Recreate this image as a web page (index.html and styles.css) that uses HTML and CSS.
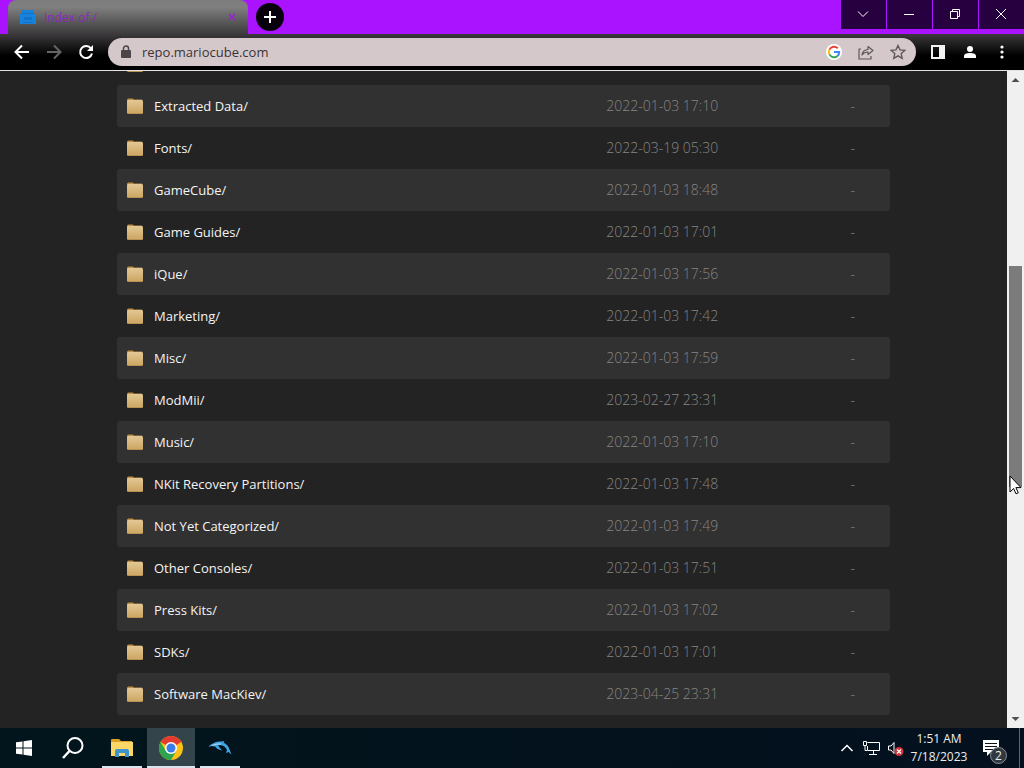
FILE: index.html
```html
<!DOCTYPE html>
<html lang="en">
<head>
    <meta charset="UTF-8">
    <meta name="viewport" content="width=device-width, initial-scale=1.0">
    <title>Index of /</title>
    <link rel="stylesheet" href="styles.css">
    <script src="listing.js" defer></script>
</head>
<body>
    <!-- Folder icon shared by all the rows -->
    <svg class="defs" width="0" height="0" aria-hidden="true">
        <defs>
            <linearGradient id="folder-fill" x1="0" y1="0" x2="0" y2="1">
                <stop offset="0" stop-color="#e3c894"/>
                <stop offset="1" stop-color="#cba561"/>
            </linearGradient>
            <symbol id="folder" viewBox="0 0 16 16">
                <path d="M0 4V2q0-1.500 1.500-1.500h4L7 1.500h7.500q1 0 1 1v3H0z" fill="#bd9049"/>
                <rect x="0" y="2" width="16" height="14" rx="1.500" fill="url(#folder-fill)"/>
                <path d="M1 15.500h14" stroke="#b89350"/>
            </symbol>
        </defs>
    </svg>

    <header class="titlebar">
        <div class="tab">
            <svg width="16" height="16" viewBox="0 0 16 16">
                <path d="M1 1h13v3H1zM0 5h16v10H0z" fill="#1683dc"/>
                <path d="M4 8h8v3H4z" fill="#1471c8"/>
                <path d="M2 4.500h12M3 13.500h10" stroke="#146fc4"/>
            </svg>
            <span class="tab-title">Index of /</span>
            <button class="tab-close" aria-label="Close tab">
                <svg width="8" height="8" viewBox="0 0 8 8"><path d="M1 1l6 6M7 1l-6 6" stroke="#9a1fd6" stroke-width="1.500"/></svg>
            </button>
        </div>
        <button class="new-tab" aria-label="New tab">
            <svg width="12" height="12" viewBox="0 0 12 12"><path d="M6 0v12M0 6h12" stroke="#fff" stroke-width="2"/></svg>
        </button>
        <div class="window-buttons">
            <button aria-label="Search tabs"><svg width="12" height="12" viewBox="0 0 12 12"><path d="M1 3.500l5 5 5-5"/></svg></button>
            <button aria-label="Minimize"><svg width="12" height="12" viewBox="0 0 12 12"><path d="M1 6.500h10"/></svg></button>
            <button aria-label="Restore"><svg width="12" height="12" viewBox="0 0 12 12"><path d="M1.500 3.500h7v7h-7zM3.500 3.500v-2h7v7h-2"/></svg></button>
            <button aria-label="Close"><svg width="12" height="12" viewBox="0 0 12 12"><path d="M1 1l10 10M11 1L1 11"/></svg></button>
        </div>
    </header>

    <nav class="toolbar">
        <button aria-label="Back"><svg width="16" height="16" viewBox="0 0 16 16"><path d="M15 8H2M8 1.500L1.500 8 8 14.500" fill="none" stroke="#fff" stroke-width="2"/></svg></button>
        <button aria-label="Forward"><svg width="16" height="16" viewBox="0 0 16 16"><path d="M1 8h13M8 1.500L14.500 8 8 14.500" fill="none" stroke="#666" stroke-width="2"/></svg></button>
        <button aria-label="Reload"><svg width="16" height="16" viewBox="0 0 16 16"><path d="M13 4.500A6 6 0 1 0 14 9.500" fill="none" stroke="#fff" stroke-width="2"/><path d="M15 1v6H9z" fill="#fff"/></svg></button>
        <div class="omnibox">
            <svg width="10" height="14" viewBox="0 0 10 14"><rect x="0" y="5" width="10" height="8" rx="1" fill="#4b4548"/><path d="M2.500 6V3.500a2.500 2.500 0 0 1 5 0V6" fill="none" stroke="#4b4548" stroke-width="1.500"/></svg>
            <input type="text" value="repo.mariocube.com" aria-label="Address">
            <button aria-label="Search with Google">
                <svg width="16" height="16" viewBox="0 0 16 16">
                    <circle cx="8" cy="8" r="8" fill="#fff"/>
                    <g fill="none" stroke-width="2">
                        <path d="M11.800 4.200A5.200 5.200 0 0 0 3.400 5.600" stroke="#ea4335"/>
                        <path d="M3.400 5.600a5.200 5.200 0 0 0 0 4.800" stroke="#fbbc05"/>
                        <path d="M3.400 10.400a5.200 5.200 0 0 0 8.100 1.500" stroke="#34a853"/>
                        <path d="M11.500 11.900A5.200 5.200 0 0 0 13.200 8H8" stroke="#4285f4"/>
                    </g>
                </svg>
            </button>
            <button aria-label="Share"><svg width="16" height="16" viewBox="0 0 16 16"><path d="M3 5H1v10h12v-3M4 11q.500-5 6-5.500V2.500L15 6.500l-5 4V8Q6 8 4 11z" fill="none" stroke="#5f585b" stroke-width="1.200" stroke-linejoin="round"/></svg></button>
            <button aria-label="Bookmark"><svg width="16" height="16" viewBox="0 0 16 16"><path d="M8 1.500l2 4.400 4.800.500-3.600 3.200 1 4.700L8 11.900l-4.200 2.400 1-4.700L1.200 6.400 6 5.900z" fill="none" stroke="#5f585b" stroke-width="1.400"/></svg></button>
        </div>
        <button aria-label="Side panel"><svg width="14" height="14" viewBox="0 0 14 14"><path d="M0 0h14v14H0zM2 2v10h6V2z" fill="#f2f2f2" fill-rule="evenodd"/></svg></button>
        <button aria-label="Profile"><svg width="16" height="16" viewBox="0 0 16 16"><circle cx="8" cy="5" r="3" fill="#fff"/><path d="M2 14v-2q0-3 6-3t6 3v2z" fill="#fff"/></svg></button>
        <button aria-label="Menu"><svg width="4" height="14" viewBox="0 0 4 14"><circle cx="2" cy="2" r="1.600" fill="#fff"/><circle cx="2" cy="7" r="1.600" fill="#fff"/><circle cx="2" cy="12" r="1.600" fill="#fff"/></svg></button>
    </nav>

    <div class="viewport">
        <main>
            <table class="listing">
                <colgroup>
                    <col class="col-name">
                    <col class="col-date">
                    <col class="col-size">
                </colgroup>
                <tbody id="files">
                    <tr><td><svg class="folder"><use href="#folder"/></svg></td><td></td><td></td></tr>
                </tbody>
            </table>
        </main>
        <div class="scrollbar">
            <svg width="17" height="17" viewBox="0 0 17 17"><path d="M4.500 11h8L8.500 7z" fill="#505050"/></svg>
            <div class="track">
                <div class="thumb">
                    <svg class="cursor" width="13" height="20" viewBox="0 0 13 20"><path d="M1 1v16l3.600-3.500 2.400 5.300 2.300-1-2.400-5.200H12z" fill="#fff" stroke="#000"/></svg>
                </div>
            </div>
            <svg width="17" height="17" viewBox="0 0 17 17"><path d="M4.500 6h8l-4 4z" fill="#505050"/></svg>
        </div>
    </div>

    <footer class="taskbar">
        <button aria-label="Start"><svg width="16" height="16" viewBox="0 0 16 16"><path d="M0 2.300l6.500-.900v6.100H0zM7.500 1.200L16 0v7.500H7.500zM0 8.500h6.500v6.100L0 13.700zM7.500 8.500H16V16l-8.500-1.200z" fill="#fff"/></svg></button>
        <button aria-label="Search"><svg width="24" height="24" viewBox="0 0 24 24"><circle cx="14" cy="9.500" r="7.500" fill="none" stroke="#fff" stroke-width="2"/><path d="M8.500 15L2 22" stroke="#fff" stroke-width="2.500"/></svg></button>
        <button class="running" aria-label="File Explorer">
            <svg width="22" height="20" viewBox="0 0 22 20">
                <path d="M0 2q0-1 1-1h7l2 2h11v4H0z" fill="#d9a227"/>
                <path d="M0 4h22v14H0z" fill="#fbd768"/>
                <path d="M4 19v-6q0-2 2-2h10q2 0 2 2v6h-4v-4H8v4z" fill="#3f94cb"/>
            </svg>
        </button>
        <button class="running active" aria-label="Google Chrome">
            <svg width="24" height="24" viewBox="0 0 24 24">
                <circle cx="12" cy="12" r="12" fill="#fbc116"/>
                <path d="M12 12L1.600 6A12 12 0 0 1 22.400 6z" fill="#e33b2e"/>
                <path d="M1.600 6A12 12 0 0 0 12 24l5.200-9H6.800z" fill="#2da44e"/>
                <circle cx="12" cy="12" r="6" fill="#fff"/>
                <circle cx="12" cy="12" r="4.500" fill="#3b7de8"/>
            </svg>
        </button>
        <button class="running" aria-label="Dolphin">
            <svg width="24" height="16" viewBox="0 0 24 16">
                <path d="M.500 7Q2 4 5 3.500 8 1 13 1.500L16.500 1l-1 1.500q5 2.500 6 7l2 5-3-2.500-2.500 1 1-3Q17 5.500 12 5L10 5.500l4 5-4.500-1.500L7 6.500 3.500 6z" fill="#3fa4e4"/>
                <path d="M4 5.500q5-2 9-1.500" fill="none" stroke="#b7def5"/>
            </svg>
        </button>
        <div class="tray">
            <button aria-label="Show hidden icons"><svg width="14" height="10" viewBox="0 0 14 10"><path d="M1.500 8L7 2.500 12.500 8" fill="none" stroke="#fff" stroke-width="1.500"/></svg></button>
            <button aria-label="Network"><svg width="17" height="14" viewBox="0 0 17 14"><path d="M4.500 1.500h12v8h-12V5M.500.500h3v4h-3zM2 4.500v5h2M10.500 10v3M6 13.500h8" fill="none" stroke="#fff"/></svg></button>
            <button aria-label="Volume muted"><svg width="17" height="15" viewBox="0 0 17 15"><path d="M1.500 5H4l3-3.500v11L4 9H1.500z" fill="none" stroke="#fff"/><circle cx="12" cy="10.500" r="4.500" fill="#cf3338"/><path d="M10 8.500l4 4M14 8.500l-4 4" stroke="#fff" stroke-width="1.300"/></svg></button>
            <div class="clock">
                <time>1:51 AM</time>
                <time>7/18/2023</time>
            </div>
            <button class="notifications" aria-label="Notifications">
                <svg width="16" height="17" viewBox="0 0 16 17"><path d="M0 0h16v12h-8l-4 4v-4H0z" fill="#fff"/><path d="M2 3.500h12M2 6.500h12M2 9.500h8" stroke="#08121d"/></svg>
                <span class="badge">2</span>
            </button>
        </div>
    </footer>
</body>
</html>
```

FILE: styles.css
```css
* {
    box-sizing: border-box;
}
body {
    margin: 0;
    height: 100vh;
    display: flex;
    flex-direction: column;
    overflow: hidden;
    font-family: "Open Sans", "Noto Sans", sans-serif;
    font-size: 13px;
    background-color: #232323;
    color: #eeeeee;
}
button {
    display: flex;
    align-items: center;
    justify-content: center;
    padding: 0;
    border: none;
    background: none;
    color: inherit;
    font: inherit;
}
svg {
    display: block;
    flex-shrink: 0;
}
.defs {
    position: absolute;
}

/* Title bar */
.titlebar {
    flex: none;
    display: flex;
    height: 34px;
    padding-left: 8px;
    background-color: #a913ff;
}
.tab {
    display: flex;
    align-items: center;
    gap: 8px;
    width: 240px;
    padding: 0 12px;
    border-radius: 8px 8px 0 0;
    background: linear-gradient(#7c7c7c, #808080 20%, #3c3a3c);
}
.tab-title {
    flex: 1;
    font-size: 12px;
    color: #8d28bd;
}
.tab-close {
    width: 8px;
    height: 16px;
}
.new-tab {
    width: 28px;
    height: 28px;
    margin: 3px 0 0 8px;
    border-radius: 50%;
    background-color: #08000c;
}
.window-buttons {
    display: flex;
    gap: 1px;
    height: 29px;
    margin-left: auto;
}
.window-buttons button {
    width: 45px;
    padding: 0 2px 1px 0;
    background-color: #270040;
}
.window-buttons path {
    fill: none;
    stroke: #ffffff;
}

/* Toolbar */
.toolbar {
    flex: none;
    display: flex;
    align-items: center;
    gap: 4px;
    height: 37px;
    padding: 0 8px;
    border-bottom: 1px solid #e4e4e4;
    background: linear-gradient(#3c3a3c, #000000 60%);
}
.toolbar > button {
    width: 28px;
    height: 28px;
}
.omnibox {
    flex: 1;
    display: flex;
    align-items: center;
    gap: 16px;
    height: 28px;
    margin: 0 4px;
    padding: 0 10px 0 13px;
    border-radius: 14px;
    background-color: #d5c8cb;
}
.omnibox input {
    flex: 1;
    min-width: 0;
    margin-left: -5px;
    padding: 0;
    border: none;
    outline: none;
    background: none;
    color: #3b3437;
    font: inherit;
}

/* Page */
.viewport {
    flex: 1;
    display: flex;
    min-height: 0;
}
main {
    flex: 1;
    overflow: hidden;
    padding: 0 117px;
}
.listing {
    width: 100%;
    margin-top: -28px;
    table-layout: fixed;
    border-collapse: separate;
    border-spacing: 0;
}
.col-name {
    width: 62%;
}
.col-date {
    width: 20%;
}
.col-size {
    width: 18%;
}
.listing td {
    height: 42px;
    padding: 0 10px;
    font-size: 14px;
    font-weight: 300;
    line-height: 18px;
    color: #858585;
}
.listing tr:nth-child(even) td {
    background-color: #313131;
}
.listing td:first-child {
    border-radius: 3px 0 0 3px;
}
.listing td:last-child {
    padding-right: 35px;
    border-radius: 0 3px 3px 0;
    text-align: right;
}
.listing a {
    display: flex;
    align-items: center;
    gap: 11px;
    font-size: 13px;
    font-weight: 400;
    color: #f4f4f4;
    text-decoration: none;
}
.folder {
    width: 16px;
    height: 16px;
}

/* Scrollbar */
.scrollbar {
    display: flex;
    flex-direction: column;
    width: 17px;
    background-color: #f0f0f0;
}
.track {
    flex: 1;
    padding: 0 2px;
}
.thumb {
    position: relative;
    top: 28.5%;
    height: 35.5%;
    background-color: #7b7b7b;
}
.cursor {
    position: absolute;
    left: 0;
    bottom: -8px;
}

/* Taskbar */
.taskbar {
    flex: none;
    display: flex;
    gap: 1px;
    height: 40px;
    background: linear-gradient(90deg, #02151c, #04101e);
}
.taskbar > button {
    width: 48px;
}
.running {
    background: linear-gradient(#d9e4ee, #d9e4ee) center bottom / 40px 2px no-repeat;
}
.running.active {
    background-color: #33444a;
    background-size: 48px 2px;
}
.tray {
    display: flex;
    align-items: center;
    margin-left: auto;
    margin-right: 4px;
    padding-right: 8px;
    border-right: 1px solid #5b6670;
}
.tray > button {
    width: 24px;
    height: 40px;
}
.clock {
    display: flex;
    flex-direction: column;
    width: 64px;
    font-size: 12px;
    line-height: 18px;
    text-align: center;
}
.tray .notifications {
    position: relative;
    width: 40px;
}
.badge {
    position: absolute;
    right: 4px;
    bottom: 4px;
    width: 17px;
    border: 1px solid #8a9097;
    border-radius: 50%;
    background-color: #303840;
    font-size: 12px;
    line-height: 15px;
}
```

FILE: listing.js
```javascript
const folders = [
    ['Extracted Data/', '2022-01-03 17:10'],
    ['Fonts/', '2022-03-19 05:30'],
    ['GameCube/', '2022-01-03 18:48'],
    ['Game Guides/', '2022-01-03 17:01'],
    ['iQue/', '2022-01-03 17:56'],
    ['Marketing/', '2022-01-03 17:42'],
    ['Misc/', '2022-01-03 17:59'],
    ['ModMii/', '2023-02-27 23:31'],
    ['Music/', '2022-01-03 17:10'],
    ['NKit Recovery Partitions/', '2022-01-03 17:48'],
    ['Not Yet Categorized/', '2022-01-03 17:49'],
    ['Other Consoles/', '2022-01-03 17:51'],
    ['Press Kits/', '2022-01-03 17:02'],
    ['SDKs/', '2022-01-03 17:01'],
    ['Software MacKiev/', '2023-04-25 23:31']
];

const files = document.getElementById('files');

folders.forEach(([name, date]) => {
    const row = document.createElement('tr');
    row.innerHTML = `<td><a href="#"><svg class="folder"><use href="#folder"/></svg>${name}</a></td><td>${date}</td><td>-</td>`;
    files.appendChild(row);
});
```
